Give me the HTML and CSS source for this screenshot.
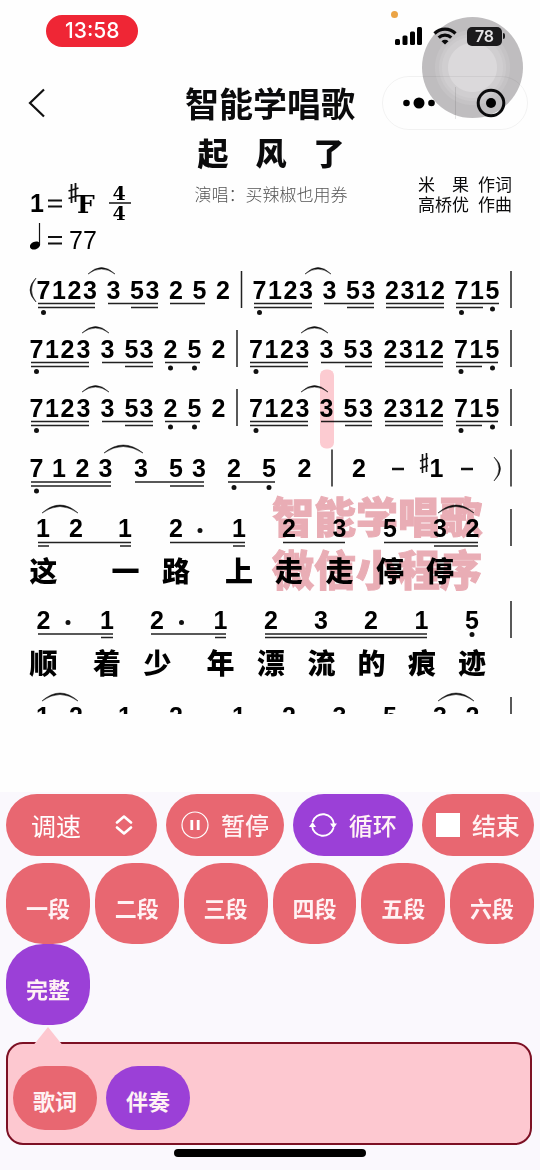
FILE: index.html
```html
<!DOCTYPE html>
<html lang="zh-CN">
<head>
<meta charset="utf-8">
<meta name="viewport" content="width=device-width, initial-scale=1">
<title>智能学唱歌</title>
<link rel="stylesheet" href="styles.css">
</head>
<body>
<div class="app">
  <header class="top">
    <div class="status">
      <time class="clock">13:58</time>
      <div class="status-icons">
        <span class="mic-dot"></span>
        <svg width="28" height="18" viewBox="0 0 28 18" aria-hidden="true"><rect x="0" y="12" width="5" height="6" rx="1.5"/><rect x="7.5" y="8.5" width="5" height="9.500" rx="1.500"/><rect x="15" y="4.500" width="5" height="13.500" rx="1.500"/><rect x="22" y="0" width="5" height="18" rx="1.500"/></svg>
        <svg width="24" height="18" viewBox="0 0 24 18" fill="none" stroke="#0b0b0c" stroke-width="3.200" aria-hidden="true"><path d="M1.500 6.500a15 15 0 0 1 21 0"/><path d="M5.700 10.700a9 9 0 0 1 12.600 0"/><path d="M8.500 14.200a5 5 0 0 1 7 0L12 17.600z" fill="#0b0b0c" stroke="none"/></svg>
        <span class="battery">78</span>
      </div>
    </div>
    <nav class="nav">
      <button class="back" type="button" aria-label="返回"><svg width="18" height="30" viewBox="0 0 18 30" fill="none" stroke="#111" stroke-width="2.200"><path d="M16 1.500 2 15l14 13.500"/></svg></button>
      <h1>智能学唱歌</h1>
      <div class="capsule">
        <button type="button" aria-label="更多"><svg width="32" height="12" viewBox="0 0 32 12"><circle cx="3.500" cy="6" r="3.300"/><circle cx="16" cy="6" r="5.500"/><circle cx="28.500" cy="6" r="3.300"/></svg></button>
        <button type="button" aria-label="关闭"><svg width="30" height="30" viewBox="0 0 30 30"><circle cx="15" cy="15" r="12.800" fill="none" stroke="#0b0b0c" stroke-width="3"/><circle cx="15" cy="15" r="5"/></svg></button>
      </div>
    </nav>
    <div class="touch" aria-hidden="true"></div>
  </header>

  <main class="sheet">
    <h2 class="song"><span>起</span><span>风</span><span>了</span></h2>
    <div class="meta">
      <svg class="key" width="110" height="72" viewBox="0 0 110 72" role="img">
        <text class="note" x="7" y="30" text-anchor="middle">1</text>
        <path d="M18 18.500h14M18 24.500h14" stroke="#111" stroke-width="2"/>
        <path d="M41.500 2v19M45.500 1v19M38.500 9l10-3M38.500 16.500l10-3" stroke="#111" stroke-width="1.800"/>
        <text class="serif" x="47" y="31" font-size="25">F</text>
        <text class="serif" x="89" y="18" font-size="19" text-anchor="middle">4</text>
        <path d="M79 21h22" stroke="#111" stroke-width="1.500"/>
        <text class="serif" x="89" y="38" font-size="19" text-anchor="middle">4</text>
        <ellipse cx="5" cy="63.500" rx="5.300" ry="3.800" transform="rotate(-22 5 63.500)"/>
        <path d="M9.500 62V41" stroke="#111" stroke-width="1.200"/>
        <path d="M18 55h14M18 61.500h14" stroke="#111" stroke-width="2.200"/>
        <text class="tempo" x="39" y="67">77</text>
      </svg>
      <p class="singer">演唱：买辣椒也用券</p>
      <p class="credits"><span class="wide"><i>米</i><i>果</i></span><span>作词</span><span>高桥优</span><span>作曲</span></p>
    </div>

    <svg class="score" viewBox="0 260 540 454" role="img" aria-label="起风了 简谱">
      <g class="watermark">
        <text x="272" y="533">智能学唱歌</text>
        <text x="272" y="586">微信小程序</text>
      </g>

      <g class="notes">
        <text x="43.500 59 74.500 90 113.500 137 152.500 176 199.500 223" y="299">7123353252</text>
        <text x="259.500 275 290.500 306 329.500 353 368.500 392 407.500 422.500 438 461.500 477 492.500" y="299">71233532312715</text>
        <text x="36.500 52 67.500 83.500 107.500 131.500 146.500 170.500 194.500 218.500" y="358">7123353252</text>
        <text x="256 271.500 287 302.500 326.500 350.500 366 390.500 406 421.500 437 461 476.500 492.500" y="358">71233532312715</text>
        <text x="36.500 52 67.500 83.500 107.500 131.500 146.500 170.500 194.500 218.500" y="417">7123353252</text>
        <text x="256 271.500 287 302.500 326.500 350.500 366 390.500 406 421.500 437 461 476.500 492.500" y="417">71233532312715</text>
        <text x="36.500 59 82.500 105.500 141 176 199 234 269 304.500 359 436.500" y="477">712335325221</text>
        <text x="43 76 125 176 239 289 339.500 390 440 472.500" y="537">1212123532</text>
        <text x="43.500 107 157 220.500 271 321 371 421.500 472" y="629">212123215</text>
        <text x="43 76 125 176 239 289 339.500 390 440 472.500" y="725">1212123532</text>
      </g>

      <g class="lyrics">
        <text x="43.500 125.500 176 239 289 339.500 390 440" y="582">这一路上走走停停</text>
        <text x="43.500 107 157.500 220.500 271 321.500 371.500 422 472" y="674">顺着少年漂流的痕迹</text>
      </g>

      <path class="bars" d="M241.500 271v37M511 271v37M237 330v37M511 330v37M237 389v37M511 389v37M332 449.500v37M511 449.500v37M511 509v37M511 601v37M511 697v37"/>

      <g class="beams">
        <path d="M38 303.500H95M108 303.500H158M170 303.500H205M254 303.500H312M324 303.500H374M386 303.500H444M456 303.500H499M38 307.500H95M131 307.500H158M254 307.500H312M347 307.500H374M386 307.500H444M456 307.500H483"/>
        <path d="M31 362.500H89M102 362.500H153M165 362.500H200M250 362.500H308M321 362.500H372M385 362.500H443M456 362.500H498M31 366.500H89M125 366.500H153M250 366.500H308M345 366.500H372M385 366.500H443M456 366.500H482"/>
        <path d="M31 421.500H89M102 421.500H153M165 421.500H200M250 421.500H308M321 421.500H372M385 421.500H443M456 421.500H498M31 425.500H89M125 425.500H153M250 425.500H308M345 425.500H372M385 425.500H443M456 425.500H482"/>
        <path d="M31 482H111M135 482H204M228 482H275M31 486H111M170 486H204"/>
        <path d="M38 542.500H131M170 542.500H245M283 542.500H345M384 542.500H478M38 546H49M120 546H131M233 546H245M434 546H478"/>
        <path d="M38 634H113M151 634H226M265 634H427M101 637.500H113M215 637.500H226M265 637.500H427"/>
      </g>

      <path class="slurs" d="M88 274Q101.500 261 115 274Q101.500 264 88 274ZM305 274Q318 261 331 274Q318 264 305 274ZM82 333Q95.500 320 109 333Q95.500 323 82 333ZM301 333Q314.500 320 328 333Q314.500 323 301 333ZM82 392Q95.500 379 109 392Q95.500 382 82 392ZM301 392Q314.500 379 328 392Q314.500 382 301 392ZM104 453Q123 437 143 453Q123 440 104 453ZM42 513Q60 497 78 513Q60 500 42 513ZM438 513Q456 497 474 513Q456 500 438 513ZM42 701Q60 685 78 701Q60 688 42 701ZM438 701Q456 685 474 701Q456 688 438 701Z"/>
      <path class="parens" d="M36 278Q24 290 36 302Q27 290 36 278ZM494 457Q507 468.500 494 481Q504 468.500 494 457Z"/>
      <path class="rests" d="M392 469H404M461 469H473"/>
      <path class="sharp" d="M422.500 454v19M426.500 453v19M420 461l8-3M420 468.500l8-3"/>

      <path class="dots" d="M43.500 312.500h0M259.500 312.500h0M461.500 312.500h0M492.500 309h0M36.500 371.500h0M170.500 368h0M194.500 368h0M256 371.500h0M461 371.500h0M492.500 368h0M36.500 430.500h0M170.500 427h0M194.500 427h0M256 430.500h0M461 430.500h0M492.500 427h0M36.500 491h0M234 487.500h0M269 487.500h0M200 530.500h0M68 622.500h0M181.500 622.500h0M472 634.500h0"/>
      <rect class="cursor" x="320" y="369.500" width="14" height="79" rx="6"/>
    </svg>
  </main>

  <section class="controls">
    <div class="playback">
      <div class="speed">
        <select aria-label="调速"><option>调速</option></select>
        <svg width="18" height="20" viewBox="0 0 18 20" fill="none" stroke="#fff" stroke-width="2.600" stroke-linecap="round" stroke-linejoin="round" aria-hidden="true"><path d="m2 7.500 7-6 7 6M2 12.500l7 6 7-6"/></svg>
      </div>
      <button type="button" class="btn pause"><svg width="28" height="28" viewBox="0 0 28 28" fill="none" stroke="#fff" aria-hidden="true"><circle cx="14" cy="14" r="13" stroke-width="1.200"/><path d="M10.800 9v10M17.200 9v10" stroke-width="2.800"/></svg>暂停</button>
      <button type="button" class="btn loop on"><svg width="28" height="26" viewBox="0 0 28 26" fill="none" stroke="#fff" stroke-width="1.900" aria-hidden="true"><path d="M3.500 10A11 11 0 0 1 25 12.500M24.500 16A11 11 0 0 1 3 13.500"/><path d="M21 11.500h7l-3.500 5zM0 15h7L3.500 10z" fill="#fff" stroke="none"/></svg>循环</button>
      <button type="button" class="btn stop"><svg width="24" height="24" viewBox="0 0 24 24" aria-hidden="true"><path fill="#fff" d="M0 0h24v24H0z"/></svg>结束</button>
    </div>
    <div class="parts">
      <button type="button" class="btn part">一段</button>
      <button type="button" class="btn part">二段</button>
      <button type="button" class="btn part">三段</button>
      <button type="button" class="btn part">四段</button>
      <button type="button" class="btn part">五段</button>
      <button type="button" class="btn part">六段</button>
      <button type="button" class="btn part on">完整</button>
    </div>
    <div class="modes">
      <button type="button" class="btn mode">歌词</button>
      <button type="button" class="btn mode on">伴奏</button>
    </div>
    <div class="home"></div>
  </section>
</div>
</body>
</html>
```
FILE: styles.css
```css
* { box-sizing: border-box; }

body {
  margin: 0;
  background: #fefefe;
  color: #0b0b0c;
  font-family: "Liberation Sans", "Noto Sans CJK SC", sans-serif;
}

h1, h2, p { margin: 0; }

button, select {
  margin: 0;
  border: 0;
  padding: 0;
  background: none;
  color: inherit;
  font-family: inherit;
}

svg { display: block; flex: none; }

.app {
  display: flex;
  flex-direction: column;
  min-height: 100vh;
}

/* top bar */
.top { position: relative; }

.status {
  display: flex;
  justify-content: space-between;
  align-items: center;
  padding: 15px 38px 0 46px;
}

.clock {
  padding: 0 19px;
  border-radius: 16px;
  background: #ef2635;
  color: #fff;
  font: 500 21px/32px Inter, sans-serif;
}

.status-icons {
  position: relative;
  z-index: 2;
  display: flex;
  align-items: center;
  gap: 10px;
  padding-top: 10px;
}

.mic-dot {
  position: absolute;
  top: -6px;
  left: -4px;
  width: 7px;
  height: 7px;
  border-radius: 50%;
  background: #eba445;
}

.battery {
  position: relative;
  width: 35px;
  border-radius: 5px;
  background: #1b1a1c;
  color: #e4e3e5;
  font: 600 16px/19px Inter, sans-serif;
  text-align: center;
}

.battery::after {
  content: "";
  position: absolute;
  top: 6px;
  right: -3px;
  width: 2px;
  height: 6px;
  border-radius: 0 2px 2px 0;
  background: #1b1a1c;
}

.nav {
  position: relative;
  z-index: 2;
  display: grid;
  grid-template-columns: 1fr auto 1fr;
  align-items: center;
  padding: 29px 12px 0 28px;
}

.nav h1 {
  padding-right: 16px;
  font-size: 34px;
  line-height: 54px;
  font-weight: 700;
  font-family: "Noto Sans CJK SC", sans-serif;
}

.capsule {
  display: grid;
  grid-template-columns: 1fr 1fr;
  justify-self: end;
  width: 146px;
  height: 54px;
  border: 1px solid rgba(0, 0, 0, .05);
  border-radius: 27px;
}

.capsule button { display: grid; place-items: center; }

.capsule button + button {
  background: linear-gradient(rgba(0, 0, 0, .1), rgba(0, 0, 0, .1)) left / 1px 32px no-repeat;
}

.touch {
  position: absolute;
  z-index: 1;
  top: 17px;
  right: 17px;
  width: 101px;
  height: 101px;
  border-radius: 50%;
  background: radial-gradient(circle, #dbd9db 24px, #d0ced0 25px 30px, #cbc9cb 31px 33px, #c5c3c5 34px 37px, #bfbdbf 38px);
}

/* score */
.sheet { padding-bottom: 78px; }

.song {
  display: flex;
  justify-content: center;
  gap: 27px;
  padding-left: 2px;
  font: 900 31px/44px "Noto Sans CJK SC", sans-serif;
}

.meta {
  display: grid;
  grid-template-columns: 1fr auto 1fr;
  align-items: start;
  padding: 8px 28px 6px 30px;
}

.key .serif { font-family: "DejaVu Serif", serif; font-weight: 700; }
.tempo { font-size: 25px; }

.note, .notes {
  font-size: 25px;
  font-weight: 700;
}

.singer {
  color: #555;
  font: 300 17px/24px "Noto Sans CJK SC", sans-serif;
}

.credits {
  display: grid;
  grid-template-columns: 51px 34px;
  column-gap: 9px;
  justify-self: end;
  font: 400 17px/20px "Noto Sans CJK SC", sans-serif;
  margin-top: -8px;
}

.credits i { font-style: normal; }
.wide { display: flex; justify-content: space-between; }

.score { width: 100%; height: auto; }
.notes, .lyrics { text-anchor: middle; }
.lyrics { font: 900 28px "Noto Sans CJK SC", sans-serif; }

.watermark {
  fill: #e9adb5;
  stroke: #e9adb5;
  stroke-width: 1;
  font: 900 42px "Noto Sans CJK SC", sans-serif;
}

.bars { stroke: #222; stroke-width: 1.5; }
.beams { stroke: #222; stroke-width: 1.3; }
.slurs, .parens { fill: #111; stroke: #111; stroke-width: .5; }
.rests { stroke: #111; stroke-width: 2.5; }
.sharp { stroke: #111; stroke-width: 1.6; }
.dots { stroke: #111; stroke-width: 5; stroke-linecap: round; }
.cursor { fill: #fdccd2; mix-blend-mode: multiply; }

/* controls */
.controls {
  flex: 1;
  padding: 2px 6px 12px;
  background: #faf8fd;
}

.btn, .speed {
  background: #e86771;
  color: #fff2f4;
  font: 700 22px/32px "Noto Sans CJK SC", sans-serif;
}

.btn.on { background: #9b40d7; }

.playback {
  display: grid;
  grid-template-columns: 151fr 117fr 120fr 112fr;
  gap: 9px;
}

.playback .btn, .speed {
  display: flex;
  align-items: center;
  justify-content: center;
  height: 62px;
  border-radius: 31px;
}

.playback .btn {
  gap: 12px;
  font-size: 24px;
  font-weight: 500;
}

.speed { position: relative; }

.speed select {
  width: 100%;
  height: 100%;
  padding-left: 25px;
  appearance: none;
  color: #fff;
  font: 400 25px/36px "Noto Sans CJK SC", sans-serif;
}

.speed svg { position: absolute; right: 24px; pointer-events: none; }

.parts {
  display: grid;
  grid-template-columns: repeat(6, 1fr);
  column-gap: 5px;
  padding-top: 7px;
}

.part {
  height: 81px;
  padding-top: 6px;
  border-radius: 37px;
}

.modes {
  position: relative;
  display: flex;
  gap: 9px;
  margin: 17px 2px 0 0;
  padding: 22px 5px 13px;
  border: 2px solid #7c1024;
  border-radius: 17px;
  background: #fdc8d0;
}

.modes::before {
  content: "";
  position: absolute;
  top: -17px;
  left: 24px;
  width: 32px;
  height: 20px;
  background: #fdc8d0;
  clip-path: polygon(50% 0, 100% 100%, 0 100%);
}

.mode {
  width: 84px;
  height: 64px;
  padding-top: 4px;
  border-radius: 32px;
}

.home {
  width: 192px;
  height: 8px;
  margin: 4px auto 0;
  border-radius: 4px;
  background: #000;
}
```
